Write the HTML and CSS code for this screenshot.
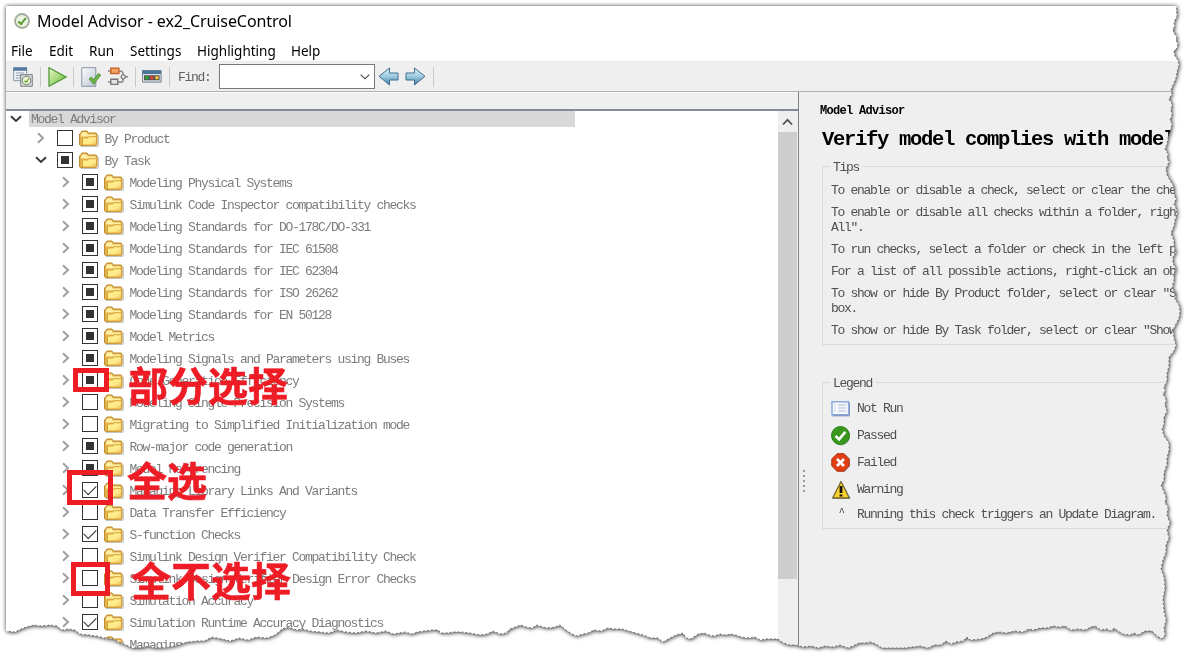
FILE: index.html
```html
<!DOCTYPE html>
<html lang="en">
<head>
<meta charset="utf-8">
<title>Model Advisor - ex2_CruiseControl</title>
<link rel="stylesheet" href="styles.css">
</head>
<body>
<svg class="defs" width="0" height="0">
  <defs>
    <path id="torn" d="M6 6H1176.5L1177 17 1175 20 1174 24 1175 26 1173 29 1174 33 1177 37 1176 40 1178 44 1177 48 1174 51 1175 56 1178 60 1179 65 1177 72 1176 78 1173 85 1171 90 1172 94 1169 99 1172 104 1171 110 1172 115 1170 120 1172 124 1170 132 1168 138 1167 144 1165 149 1168 154 1167 158 1169 162 1166 169 1167 175 1171 182 1174 187 1174 194 1176 199 1174 204 1176 208 1177 214 1175 220 1174 226 1171 233 1174 241 1174 247 1176 252 1173 257 1173 263 1176 269 1174 274 1174 280 1172 288 1176 294 1175 299 1179 305 1180 311 1179 318 1176 324 1173 330 1174 338 1176 345 1174 351 1169 357 1169 366 1167 373 1167 381 1164 387 1165 391 1163 394 1166 399 1165 405 1167 411 1164 417 1164 424 1162 429 1164 436 1169 443 1169 450 1167 458 1167 464 1164 473 1164 480 1161 485 1164 492 1166 497 1165 503 1168 507 1167 515 1170 523 1167 530 1169 538 1166 545 1166 552 1163 560 1161 569 1164 577 1165 588 1163 599 1164 611 1166 620 1164 628 1165 635 1162 639 1157 636 1152 631 1145 631 1138 635 1134 633 1130 635 1123 634 1118 631 1114 628 1111 631 1107 629 1101 630 1095 626 1091 627 1085 630 1078 629 1071 630 1065 626 1059 627 1053 626 1047 628 1040 628 1033 630 1029 629 1023 632 1015 631 1006 633 999 632 993 633 987 637 981 639 970 640 967 637 963 641 956 642 951 644 946 641 941 645 934 645 928 648 920 646 912 647 904 648 882 648 876 644 871 642 865 643 859 643 853 646 848 648 840 645 833 647 825 646 818 648 811 646 803 647 796 645 789 645 782 642 778 639 766 639 760 640 755 637 748 638 741 637 736 635 731 634 725 635 720 634 714 636 709 635 704 633 698 634 691 639 686 638 683 633 676 635 668 639 663 642 658 638 651 638 643 635 636 633 629 631 622 629 614 629 608 628 601 631 594 630 588 633 583 634 577 636 572 634 566 630 560 625 555 627 547 628 543 627 537 625 532 628 526 627 521 625 515 627 510 629 506 633 500 634 493 631 487 634 480 635 470 633 461 632 454 632 446 633 441 633 438 630 432 630 424 631 417 632 412 634 405 632 399 633 393 634 386 631 376 633 366 631 356 633 346 632 337 630 329 633 320 632 310 631 303 629 297 630 288 627 282 629 275 635 267 638 257 637 248 640 239 638 230 641 222 639 212 637 204 641 197 641 187 642 178 645 169 647 155 648 148 646 142 648 133 648 126 645 119 642 113 639 105 638 97 636 89 635 80 634 75 630 68 629 62 630 57 626 50 625 41 626 34 625 26 627 21 629 15 632 6 631Z"/>
    <clipPath id="torn-clip"><use href="#torn"/></clipPath>
    <linearGradient id="gold" x1="0" y1="0" x2="1" y2="1"><stop offset="0" stop-color="#fff58f"/><stop offset=".6" stop-color="#ffe98a"/><stop offset="1" stop-color="#e8b850"/></linearGradient>
    <linearGradient id="blue" x1="0" y1="0" x2="0" y2="1"><stop offset="0" stop-color="#d9f0f8"/><stop offset=".5" stop-color="#9dcbe1"/><stop offset="1" stop-color="#417ca2"/></linearGradient>
    <linearGradient id="green" x1="0" y1="0" x2="1" y2="1"><stop offset="0" stop-color="#eefac8"/><stop offset="1" stop-color="#62b52f"/></linearGradient>
    <linearGradient id="page" x1="0" y1="0" x2="1" y2="1"><stop offset="0" stop-color="#fff"/><stop offset="1" stop-color="#bac5d4"/></linearGradient>
    <symbol id="folder" viewBox="0 0 20 17">
      <path d="M2 16.4h16.5q1-.2 1-1.4V5" fill="none" stroke="#c5c8cf" stroke-width="1.2"/>
      <path d="M.6 14.8V4L2 2.6 3 1h5l1.3 2H17l1 1.2v10.3l-1 1.1H1.5z" fill="#e5b54d" stroke="#b98425"/>
      <path d="M2 4.4 3.6 2.3h3.8l1.4 2.2h7.8v2H2z" fill="#fff0a5"/>
      <path d="M3.5 15V8h5.3l1.4-1.3h7.3v7.7l-1.2.8z" fill="url(#gold)" stroke="#d9a13a"/>
    </symbol>
    <symbol id="right" viewBox="0 0 10 12"><path d="M2 1.2 7 6 2 10.8" fill="none" stroke="#a0a0a0" stroke-width="2"/></symbol>
    <symbol id="down" viewBox="0 0 12 8"><path d="M1 1.3 6 6l5-4.7" fill="none" stroke="#3a3a3a" stroke-width="2"/></symbol>
  </defs>
</svg>

<div class="stage">
<div class="window">
  <header class="titlebar">
    <svg width="18" height="18" viewBox="0 0 18 18"><circle cx="9" cy="9" r="7" fill="#e8f2df" stroke="#a3ad9c" stroke-width="1.8"/><path d="M5.3 9.5 8 12l4.8-6" fill="none" stroke="#5c9a2c" stroke-width="2"/></svg>
    <span>Model Advisor - ex2_CruiseControl</span>
  </header>
  <nav class="menubar"><span class="m-file">File</span><span class="m-edit">Edit</span><span class="m-run">Run</span><span class="m-settings">Settings</span><span class="m-high">Highlighting</span><span>Help</span></nav>
  <div class="toolbar">
    <svg class="t-model" width="20" height="20" viewBox="0 0 20 20"><path d="M.7.7h13v13H.7z" fill="#eef1f5" stroke="#8898aa"/><path d="M.5.5H14v3.2H.5z" fill="#54779d"/><path d="M3 6h8M3 8.5h5M3 11h4" stroke="#91a2b5"/><path d="M7.7 7.7h11.6v11.6H7.7z" fill="#d3d6d9" stroke="#798087"/><circle cx="13.5" cy="13.5" r="4.2" fill="#eff5dc" stroke="#78856c"/><path d="m11.5 13.8 1.6 1.5 2.7-3.7" fill="none" stroke="#69a42a" stroke-width="1.3"/></svg>
    <i class="sep"></i>
    <svg class="t-play" width="19" height="20" viewBox="0 0 19 20"><path d="M1 .8v18.4L18 10z" fill="url(#green)" stroke="#4f9938" stroke-width="1.3"/></svg>
    <i class="sep"></i>
    <svg class="t-check" width="21" height="20" viewBox="0 0 21 20"><path d="M.8.7h14v18.6h-14z" fill="url(#page)" stroke="#8593a4"/><path d="m8 12 2.3-2 2.2 2.6 5-6.3 2.3 1.8-7 9.2z" fill="#69b346" stroke="#43862b" stroke-width=".7"/></svg>
    <svg class="t-graph" width="20" height="20" viewBox="0 0 20 20"><path d="M0 4h12q3 0 3 3v7q0 1-1 1H0M15 9.8h5" fill="none" stroke="#858585" stroke-width="1.4"/><path d="M2.8 1.2h8v5.4h-8z" fill="#f2a365" stroke="#ca6729" stroke-width="1.5"/><path d="M2.8 12.2h7v5.2h-7z" fill="#e3e3e3" stroke="#777" stroke-width="1.4"/><circle cx="15.2" cy="9.8" r="2.2" fill="#ddd" stroke="#666"/></svg>
    <i class="sep"></i>
    <svg class="t-lights" width="20" height="13" viewBox="0 0 20 13"><path d="M.5.5h18.6v11.6H.5z" fill="#dce0e5" stroke="#758394"/><path d="M.5.5h18.6V4H.5z" fill="#4b7598"/><path d="M2 5.2h15.6v5H2z" fill="#555"/><circle cx="4.7" cy="7.7" r="1.8" fill="#20ad35"/><circle cx="9.8" cy="7.7" r="1.8" fill="#e93832"/><circle cx="14.9" cy="7.7" r="1.8" fill="#f7c52e"/></svg>
    <i class="sep"></i>
    <span class="find">Find:</span>
    <div class="combo"><svg width="10" height="6" viewBox="0 0 10 6"><path d="m.7.6 4.3 4.2L9.3.6" fill="none" stroke="#444" stroke-width="1.1"/></svg></div>
    <svg class="t-back" width="21" height="19" viewBox="0 0 21 19"><path d="M1 9.3 11.5 1v5H20v7h-8.5v5z" fill="url(#blue)" stroke="#426f91"/></svg>
    <svg width="21" height="19" viewBox="0 0 21 19"><path d="M20 9.3 9.5 1v5H1v7h8.5v5z" fill="url(#blue)" stroke="#426f91"/></svg>
    <i class="sep"></i>
  </div>
  <main class="content">
    <section class="left">
      <div class="colhead"></div>
      <div class="treebox">
        <div class="tree">
          <div class="root"><svg width="12" height="8"><use href="#down"/></svg><span>Model Advisor</span></div>
          <div class="row top"><svg width="10" height="12"><use href="#right"/></svg><i class="cb"></i><svg width="20" height="17"><use href="#folder"/></svg><span>By Product</span></div>
          <div class="row top open"><svg width="12" height="8"><use href="#down"/></svg><i class="cb part"></i><svg width="20" height="17"><use href="#folder"/></svg><span>By Task</span></div>
          <div class="row"><svg width="10" height="12"><use href="#right"/></svg><i class="cb part"></i><svg width="20" height="17"><use href="#folder"/></svg><span>Modeling Physical Systems</span></div>
          <div class="row"><svg width="10" height="12"><use href="#right"/></svg><i class="cb part"></i><svg width="20" height="17"><use href="#folder"/></svg><span>Simulink Code Inspector compatibility checks</span></div>
          <div class="row"><svg width="10" height="12"><use href="#right"/></svg><i class="cb part"></i><svg width="20" height="17"><use href="#folder"/></svg><span>Modeling Standards for DO-178C/DO-331</span></div>
          <div class="row"><svg width="10" height="12"><use href="#right"/></svg><i class="cb part"></i><svg width="20" height="17"><use href="#folder"/></svg><span>Modeling Standards for IEC 61508</span></div>
          <div class="row"><svg width="10" height="12"><use href="#right"/></svg><i class="cb part"></i><svg width="20" height="17"><use href="#folder"/></svg><span>Modeling Standards for IEC 62304</span></div>
          <div class="row"><svg width="10" height="12"><use href="#right"/></svg><i class="cb part"></i><svg width="20" height="17"><use href="#folder"/></svg><span>Modeling Standards for ISO 26262</span></div>
          <div class="row"><svg width="10" height="12"><use href="#right"/></svg><i class="cb part"></i><svg width="20" height="17"><use href="#folder"/></svg><span>Modeling Standards for EN 50128</span></div>
          <div class="row"><svg width="10" height="12"><use href="#right"/></svg><i class="cb part"></i><svg width="20" height="17"><use href="#folder"/></svg><span>Model Metrics</span></div>
          <div class="row"><svg width="10" height="12"><use href="#right"/></svg><i class="cb part"></i><svg width="20" height="17"><use href="#folder"/></svg><span>Modeling Signals and Parameters using Buses</span></div>
          <div class="row"><svg width="10" height="12"><use href="#right"/></svg><i class="cb part"></i><svg width="20" height="17"><use href="#folder"/></svg><span>Code Generation Efficiency</span></div>
          <div class="row"><svg width="10" height="12"><use href="#right"/></svg><i class="cb"></i><svg width="20" height="17"><use href="#folder"/></svg><span>Modeling Single-Precision Systems</span></div>
          <div class="row"><svg width="10" height="12"><use href="#right"/></svg><i class="cb"></i><svg width="20" height="17"><use href="#folder"/></svg><span>Migrating to Simplified Initialization mode</span></div>
          <div class="row"><svg width="10" height="12"><use href="#right"/></svg><i class="cb part"></i><svg width="20" height="17"><use href="#folder"/></svg><span>Row-major code generation</span></div>
          <div class="row"><svg width="10" height="12"><use href="#right"/></svg><i class="cb part"></i><svg width="20" height="17"><use href="#folder"/></svg><span>Model Referencing</span></div>
          <div class="row"><svg width="10" height="12"><use href="#right"/></svg><i class="cb full"></i><svg width="20" height="17"><use href="#folder"/></svg><span>Managing Library Links And Variants</span></div>
          <div class="row"><svg width="10" height="12"><use href="#right"/></svg><i class="cb"></i><svg width="20" height="17"><use href="#folder"/></svg><span>Data Transfer Efficiency</span></div>
          <div class="row"><svg width="10" height="12"><use href="#right"/></svg><i class="cb full"></i><svg width="20" height="17"><use href="#folder"/></svg><span>S-function Checks</span></div>
          <div class="row"><svg width="10" height="12"><use href="#right"/></svg><i class="cb"></i><svg width="20" height="17"><use href="#folder"/></svg><span>Simulink Design Verifier Compatibility Check</span></div>
          <div class="row"><svg width="10" height="12"><use href="#right"/></svg><i class="cb"></i><svg width="20" height="17"><use href="#folder"/></svg><span>Simulink Design Verifier Design Error Checks</span></div>
          <div class="row"><svg width="10" height="12"><use href="#right"/></svg><i class="cb"></i><svg width="20" height="17"><use href="#folder"/></svg><span>Simulation Accuracy</span></div>
          <div class="row"><svg width="10" height="12"><use href="#right"/></svg><i class="cb full"></i><svg width="20" height="17"><use href="#folder"/></svg><span>Simulation Runtime Accuracy Diagnostics</span></div>
          <div class="row"><svg width="10" height="12"><use href="#right"/></svg><i class="cb"></i><svg width="20" height="17"><use href="#folder"/></svg><span>Managing</span></div>
        </div>
        <div class="scrollbar"><svg width="19" height="21" viewBox="0 0 19 21"><path d="m5 13.5 4.5-4.7 4.5 4.7" fill="none" stroke="#505050" stroke-width="1.8"/></svg><div class="thumb"></div></div>
      </div>
    </section>
    <div class="splitter"><i></i><i></i><i></i><i></i><i></i></div>
    <section class="report">
      <div class="crumb">Model Advisor</div>
      <h1>Verify model complies with model</h1>
      <fieldset class="tips">
        <legend>Tips</legend>
        <p>To enable or disable a check, select or clear the che</p>
        <p>To enable or disable all checks within a folder, righ<br>All".</p>
        <p>To run checks, select a folder or check in the left p</p>
        <p>For a list of all possible actions, right-click an ob</p>
        <p>To show or hide By Product folder, select or clear "S<br>box.</p>
        <p>To show or hide By Task folder, select or clear "Show</p>
      </fieldset>
      <fieldset class="legend">
        <legend>Legend</legend>
        <div class="key"><svg width="20" height="20" viewBox="0 0 20 20"><path d="M1.5 3.5h17.4v13.8H1.5z" fill="#7489b8"/><path d="M1 2.7h16.6v13H1z" fill="#f5f8ff" stroke="#8eaadb" stroke-width="1.5"/><path d="M3 6h1.5M3 9h1.5M3 12h1.5M7 6h8M7 9h8M7 12h8" stroke="#b5bfce"/></svg>Not Run</div>
        <div class="key"><svg width="20" height="20" viewBox="0 0 20 20"><circle cx="10" cy="10.4" r="9" fill="#a6b4b0"/><circle cx="9.5" cy="9.5" r="9" fill="#39971d" stroke="#2b8216"/><path d="m4.5 10 3.6 3.3 6.2-7.5" fill="none" stroke="#fff" stroke-width="2.6"/></svg>Passed</div>
        <div class="key"><svg width="20" height="20" viewBox="0 0 20 20"><path d="m7 1.2 7 .1 5 5v7l-5 5.7H7z" fill="#a7b8c1"/><path d="M6 .7h7l5.2 5.2v7L13 18.2H6L.8 13V6z" fill="#df3f12" stroke="#b5320d"/><path d="m6 6 7 7m0-7-7 7" stroke="#fff" stroke-width="2.7"/></svg>Failed</div>
        <div class="key"><svg width="20" height="20" viewBox="0 0 20 20"><path d="M11 2.5 19.8 19H2z" fill="#a7b4bd"/><path d="M10 1.5 18.4 18H1.7z" fill="#fbd12c" stroke="#736633" stroke-width="1.3" stroke-linejoin="round"/><path d="M10 6v7m0 1.5v2" stroke="#111" stroke-width="2.8"/></svg>Warning</div>
        <div class="key last"><span class="caret">^</span>Running this check triggers an Update Diagram.</div>
      </fieldset>
    </section>
  </main>
</div>
</div>
<svg class="tear-line" width="1185" height="653"><use href="#torn"/></svg>

<div class="mark box-a"></div><div class="note note-a">部分选择</div>
<div class="mark box-b"></div><div class="note note-b">全选</div>
<div class="mark box-c"></div><div class="note note-c">全不选择</div>
</body>
</html>
```

FILE: styles.css
```css
* { box-sizing: border-box; }
body { margin: 0; width: 1185px; height: 653px; overflow: hidden; background: #fff; position: relative; }
svg { display: block; flex: none; }
.defs { position: absolute; }
.stage { height: 653px; filter: drop-shadow(0 0 2px rgba(0,0,0,.6)) drop-shadow(1px 1px 1.5px rgba(0,0,0,.35)); }
.window { height: 653px; padding: 6px 0 0 6px; background: #fff; clip-path: url(#torn-clip); display: flex; flex-direction: column; }
.tear-line { position: absolute; left: 0; top: 0; fill: none; stroke: #707070; stroke-width: 1; stroke-dasharray: 2 2; clip-path: inset(8px 0 0 8px); }

.titlebar { height: 31px; flex: none; display: flex; align-items: center; gap: 6px; padding: 0 0 1px 7px; font: 16px "Noto Sans", sans-serif; color: #000; letter-spacing: -.08px; }
.menubar { height: 25px; flex: none; display: flex; align-items: center; padding: 3px 0 0 5px; font: 13.5px "Noto Sans", sans-serif; color: #000; border-bottom: 1px solid #ececec; }
.m-file { width: 38px; }
.m-edit { width: 40px; }
.m-run { width: 41px; }
.m-settings { width: 67px; }
.m-high { width: 94px; }

.toolbar { height: 30px; flex: none; display: flex; align-items: center; background: #efefef; border-bottom: 1px solid #b0b0b0; padding-left: 7px; }
.sep { width: 1px; height: 20px; background: #c9c9c9; flex: none; }
.t-model { margin-right: 7px; }
.t-play { margin: 0 6px 0 7px; }
.t-check { margin: 0 6px 0 7px; }
.t-graph { margin-right: 7px; }
.t-lights { margin: 0 7px 0 6px; }
.find { width: 41px; margin-left: 8px; padding-top: 2px; }
.combo { width: 156px; height: 25px; flex: none; border: 1px solid #777; background: #fff; display: flex; align-items: center; justify-content: flex-end; padding-right: 4px; }
.t-back { margin: 0 6px 0 3px; }
.t-back + svg { margin-right: 7px; }

.content { flex: 1; min-height: 0; display: flex; background: #efefef; }
.toolbar, .content { font: 13px/15px "Liberation Mono", monospace; letter-spacing: -1.3px; color: #606060; }
.left { width: 793px; flex: none; display: flex; flex-direction: column; border-right: 1px solid #7a828c; }
.colhead { height: 19px; flex: none; border-bottom: 2px solid #848b95; border-top: 1px solid #fafafa; }
.treebox { flex: 1; min-height: 0; display: flex; background: #fff; }
.tree { flex: 1; overflow: hidden; color: #7c7c7c; white-space: nowrap; }
.root { height: 16px; display: flex; align-items: center; gap: 7px; padding-left: 4px; }
.root span { width: 546px; height: 16px; padding: 1px 0 0 2px; background: #d8d8d8; }
.row { height: 22px; display: flex; align-items: center; padding-left: 55px; }
.row.top { padding-left: 30px; }
.row.top.open { padding-left: 29px; }
.cb { width: 16px; height: 16px; flex: none; border: 1px solid #333; background: #fff; margin: 0 6px 0 11px; display: grid; place-items: center; }
.open .cb { margin-left: 10px; }
.part::before { content: ""; width: 8px; height: 8px; background: #333; }
.full::before { content: ""; width: 11px; height: 6px; border: solid #333; border-width: 0 0 1.6px 1.6px; transform: translateY(-2px) rotate(-45deg); }
.row span { margin-left: 5.5px; padding-top: 2px; }
.scrollbar { width: 20px; flex: none; background: #efefef; padding-right: 1px; }
.thumb { height: 447px; background: #cdcdcd; }

.splitter { width: 9px; flex: none; display: flex; flex-direction: column; align-items: center; gap: 3px; padding-top: 378px; }
.splitter i { width: 2px; height: 2px; background: #999; flex: none; }
.report { flex: 1; min-width: 0; white-space: nowrap; overflow: hidden; padding: 12px 0 0 12px; color: #505050; }
.crumb { font-size: 12px; letter-spacing: -.7px; font-weight: bold; color: #000; }
h1 { margin: 7px 0 -1px 2px; font: bold 20.5px/28px "Liberation Mono", monospace; letter-spacing: -1.3px; color: #000; }
fieldset { width: 420px; margin: 0 0 0 2px; padding: 0 0 0 8px; border: 1px solid #dadada; }
legend { padding: 1px 4px 0 3px; height: 15px; margin-left: -1px; }
.tips { margin-top: 6px; height: 186px; }
.tips p { margin: 0 0 7px; }
.tips legend + p { margin-top: 9px; }
.legend { margin-top: 30px; height: 154px; }
.key { height: 27px; display: flex; align-items: center; gap: 6px; }
.legend legend + .key { margin-top: 5px; }
.key.last { height: 23px; }
.caret { width: 20px; text-align: center; font-size: 10px; line-height: 20px; margin-top: -4px; color: #333; }

.mark { position: absolute; border: 5px solid #ee1c25; }
.box-a { left: 73px; top: 368px; width: 36px; height: 24px; }
.box-b { left: 67px; top: 470px; width: 46px; height: 35px; }
.box-c { left: 71px; top: 562px; width: 39px; height: 34px; }
.note { position: absolute; font: bold 40px/40px "Noto Sans CJK SC", sans-serif; color: #ee1c25; -webkit-text-stroke: .6px #ee1c25; }
.note-a { left: 128px; top: 364px; }
.note-b { left: 127px; top: 459px; }
.note-c { left: 131px; top: 559px; }
```
